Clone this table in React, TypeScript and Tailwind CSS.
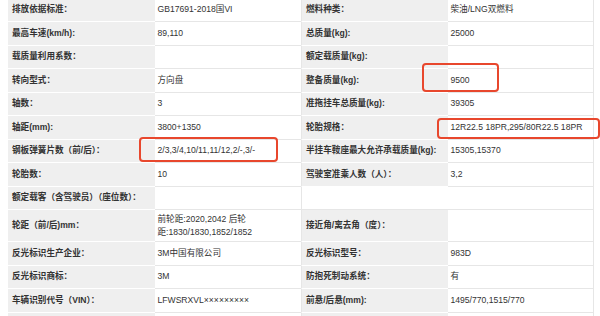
type Row = {
  l: string;
  lv: React.ReactNode;
  r?: string;
  rv?: React.ReactNode;
  tall?: boolean;
};

const rows: Row[] = [
  { l: "排放依据标准：", lv: "GB17691-2018国VI", r: "燃料种类：", rv: "柴油/LNG双燃料" },
  { l: "最高车速(km/h):", lv: "89,110", r: "总质量(kg):", rv: "25000" },
  { l: "载质量利用系数：", lv: "", r: "额定载质量(kg):", rv: "" },
  { l: "转向型式：", lv: "方向盘", r: "整备质量(kg):", rv: "9500" },
  { l: "轴数：", lv: "3", r: "准拖挂车总质量(kg):", rv: "39305" },
  { l: "轴距(mm):", lv: "3800+1350", r: "轮胎规格：", rv: "12R22.5 18PR,295/80R22.5 18PR" },
  { l: "钢板弹簧片数（前/后）：", lv: "2/3,3/4,10/11,11/12,2/-,3/-", r: "半挂车鞍座最大允许承载质量(kg):", rv: "15305,15370" },
  { l: "轮胎数：", lv: "10", r: "驾驶室准乘人数（人）：", rv: "3,2" },
  { l: "额定载客（含驾驶员）（座位数）：", lv: "" },
  {
    l: "轮距（前/后)mm：",
    lv: (
      <>
        前轮距:2020,2042 后轮
        <br />
        距:1830/1830,1852/1852
      </>
    ),
    r: "接近角/离去角（度）：",
    rv: "",
    tall: true,
  },
  { l: "反光标识生产企业：", lv: "3M中国有限公司", r: "反光标识型号：", rv: "983D" },
  { l: "反光标识商标：", lv: "3M", r: "防抱死制动系统：", rv: "有" },
  { l: "车辆识别代号（VIN）：", lv: "LFWSRXVL×××××××××", r: "前悬/后悬(mm):", rv: "1495/770,1515/770" },
  { l: "", lv: "", r: "", rv: "" },
];

function Annotation({ className }: { className: string }) {
  return (
    <div
      className={`pointer-events-none absolute rounded-[4px] border-2 border-[#e8472d] ${className}`}
    />
  );
}

export default function App() {
  return (
    <div className="relative h-[316px] w-[600px] overflow-hidden bg-white font-['Liberation_Sans','Noto_Sans_CJK_SC',sans-serif] text-[8.6px] text-[#333]">
      <div className="ml-2 mt-[-1.5px] w-[586px]">
        {rows.map((row, i) => {
          const hasRight = row.r !== undefined;
          return (
            <div
              key={i}
              className={`grid grid-cols-4 ${row.tall ? "h-[32px]" : "h-[23.5px]"}`}
            >
              <div className="flex items-center border-b border-white bg-[#efefef] pl-1 font-bold">
                {row.l}
              </div>
              <div className="flex items-center border-b border-[#e6e6e6] pl-[3px] leading-[13px]">
                <span>{row.lv}</span>
              </div>
              {hasRight ? (
                <>
                  <div className="flex items-center border-b border-l border-b-white border-l-[#e6e6e6] bg-[#efefef] pl-1 font-bold">
                    {row.r}
                  </div>
                  <div className="flex items-center border-r border-b border-[#e6e6e6] pl-[3px]">
                    {row.rv}
                  </div>
                </>
              ) : (
                <>
                  <div className="border-b border-l border-[#e6e6e6]" />
                  <div className="border-r border-b border-[#e6e6e6]" />
                </>
              )}
            </div>
          );
        })}
      </div>

      <Annotation className="left-[422px] top-[63px] h-[29px] w-[77px]" />
      <Annotation className="left-[139px] top-[137px] h-[25px] w-[139px]" />
      <Annotation className="left-[437px] top-[118px] h-[21px] w-[163px]" />
    </div>
  );
}
